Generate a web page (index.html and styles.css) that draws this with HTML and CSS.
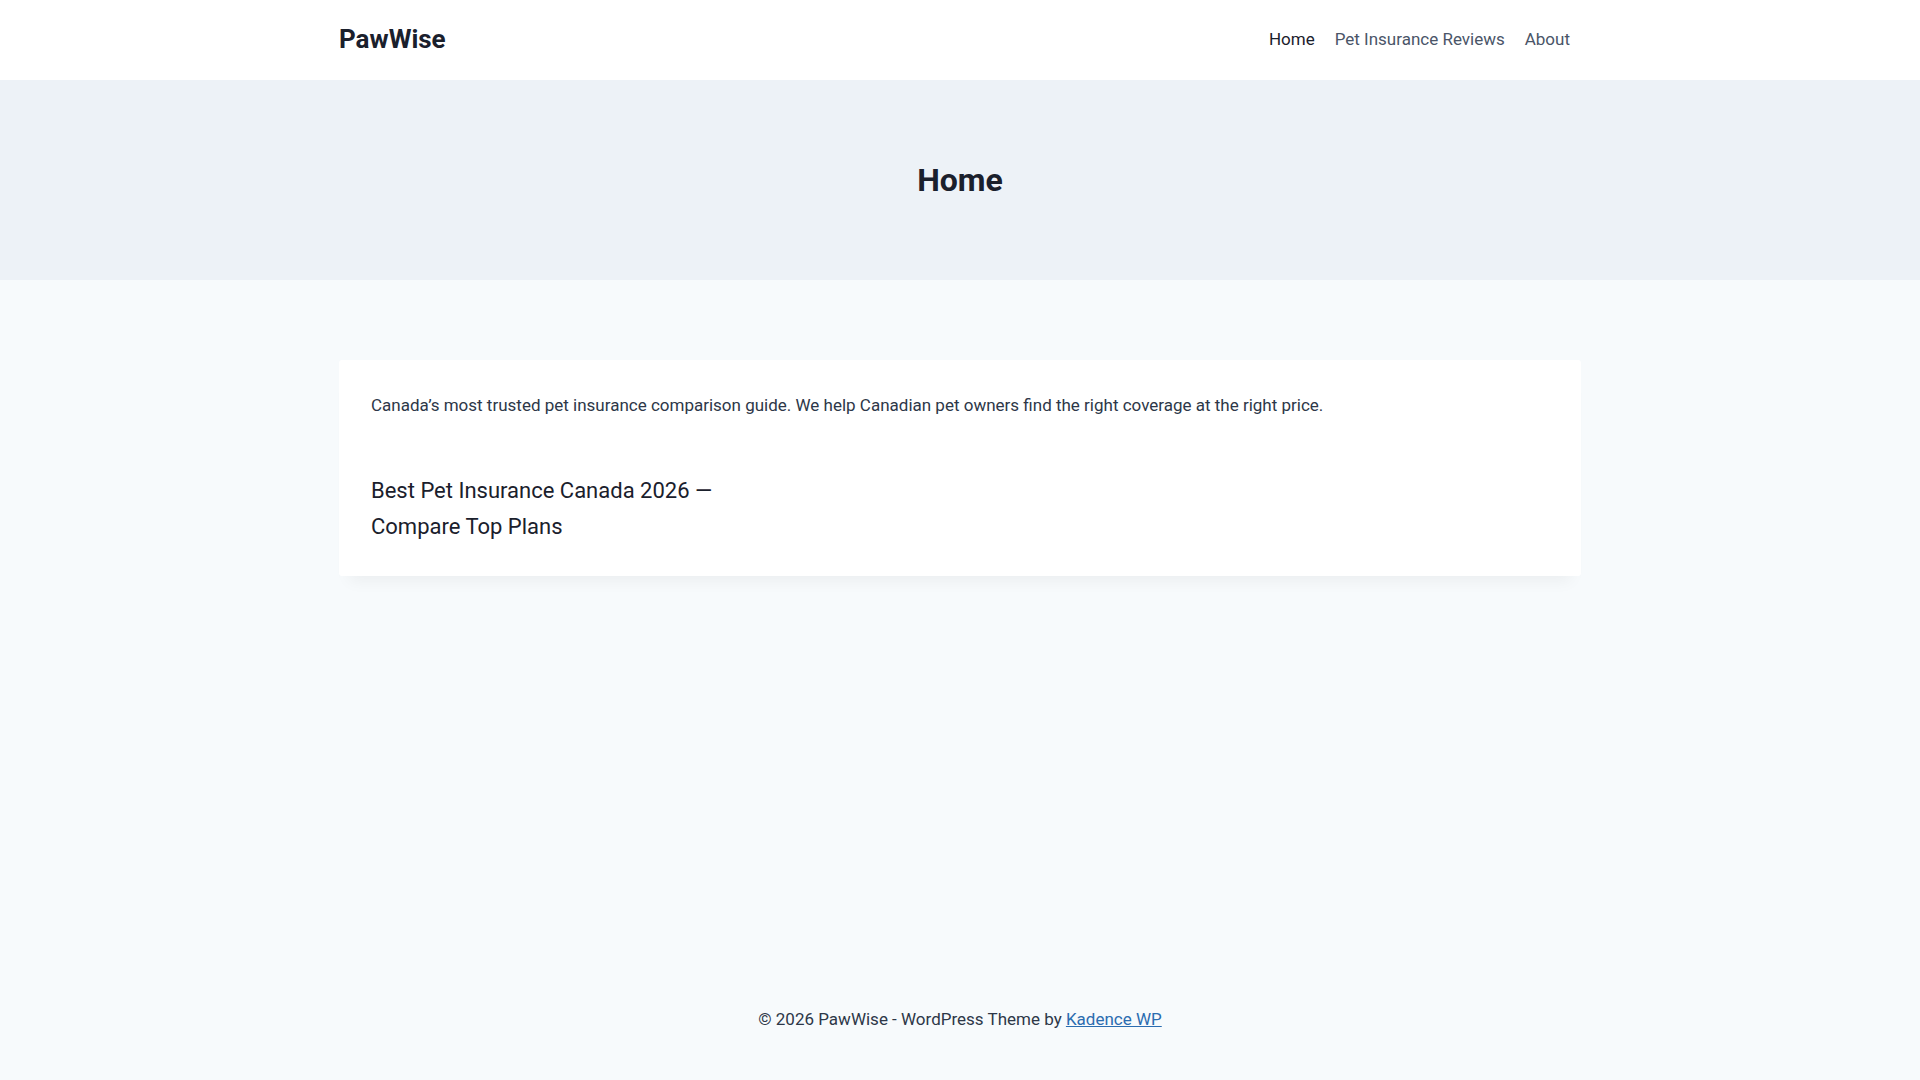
FILE: index.html
```html
<!DOCTYPE html>
<html lang="en">
<head>
<meta charset="utf-8">
<title>Home – PawWise</title>
<link rel="stylesheet" href="styles.css">
</head>
<body>
<div class="site">
  <header class="site-header">
    <div class="container header-inner">
      <a class="site-title" href="#">PawWise</a>
      <nav class="main-nav">
        <a class="nav-item current" href="#">Home</a>
        <a class="nav-item" href="#">Pet Insurance Reviews</a>
        <a class="nav-item" href="#">About</a>
      </nav>
    </div>
  </header>
  <section class="hero">
    <h1 class="hero-title">Home</h1>
  </section>
  <main class="site-main">
    <div class="container">
      <article class="content-card">
        <p class="intro">Canada’s most trusted pet insurance comparison guide. We help Canadian pet owners find the right coverage at the right price.</p>
        <div class="post-list">
          <h2 class="post-title">Best Pet Insurance Canada 2026 — Compare Top Plans</h2>
        </div>
      </article>
    </div>
  </main>
  <footer class="site-footer">
    <div class="container footer-inner">
      © 2026 PawWise - WordPress Theme by <a class="footer-link" href="#">Kadence WP</a>
    </div>
  </footer>
</div>
</body>
</html>
```

FILE: styles.css
```css
* { box-sizing: border-box; }
html, body { margin: 0; padding: 0; }
body {
  font-family: Roboto, "Liberation Sans", sans-serif;
  font-size: 17px;
  line-height: 1.6;
  color: #2D3748;
  background: #F7FAFC;
}
a { text-decoration: none; }
.site {
  min-height: 100vh;
  display: flex;
  flex-direction: column;
}
.container {
  width: 1242px;
  margin: 0 auto;
}
.site-header { background: #ffffff; }
.header-inner {
  height: 80px;
  display: flex;
  align-items: center;
  justify-content: space-between;
}
.site-title {
  font-size: 26px;
  font-weight: 700;
  color: #1A202C;
  line-height: 1.2;
}
.main-nav {
  display: flex;
  padding-right: 1px;
}
.nav-item {
  padding: 0 10px;
  color: #4A5568;
  font-size: 17px;
}
.nav-item.current { color: #1A202C; }
.hero {
  background: #EDF2F7;
  padding: 76px 0;
  text-align: center;
}
.hero-title {
  margin: 0;
  font-size: 32px;
  line-height: 1.5;
  font-weight: 700;
  color: #1A202C;
}
.site-main {
  flex: 1;
  padding-top: 80px;
}
.content-card {
  background: #ffffff;
  border-radius: 3px;
  padding: 32px 32px 31px;
  box-shadow: 0 15px 15px -10px rgba(0, 0, 0, 0.05);
}
.intro { margin: 0; }
.post-list {
  margin-top: 54px;
  width: 372px;
}
.post-title {
  margin: 0;
  font-size: 22px;
  line-height: 36px;
  font-weight: 400;
  color: #1A202C;
}
.site-footer {
  padding: 31px 0 47px;
}
.footer-inner {
  text-align: center;
  font-size: 17px;
  line-height: 1.6;
  color: #2D3748;
}
.footer-link {
  color: #2B6CB0;
  text-decoration: underline;
}
```
